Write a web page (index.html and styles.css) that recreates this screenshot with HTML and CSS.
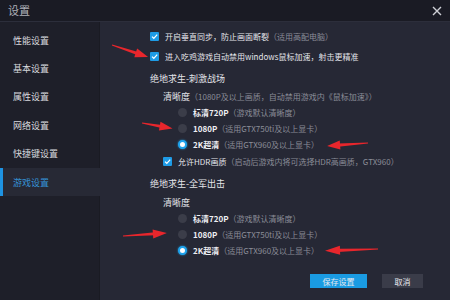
FILE: index.html
```html
<!DOCTYPE html>
<html lang="zh">
<head>
<meta charset="utf-8">
<link rel="stylesheet" href="styles.css">
</head>
<body>
<div class="window">
  <div class="titlebar">
    <span class="title">设置</span>
    <svg class="close" width="10" height="10" viewBox="0 0 10 10"><path d="M1 1L9 9M9 1L1 9" stroke="#cfd0d6" stroke-width="1.4"/></svg>
  </div>
  <div class="main">
    <nav class="sidebar">
      <div class="nav-item">性能设置</div>
      <div class="nav-item">基本设置</div>
      <div class="nav-item">属性设置</div>
      <div class="nav-item">网络设置</div>
      <div class="nav-item">快捷键设置</div>
      <div class="nav-item active">游戏设置</div>
    </nav>
    <section class="content">
      <div class="row r1"><span class="cb"><svg width="9" height="9" viewBox="0 0 9 9"><path d="M2 4.6L3.8 6.3L7.2 2.6" fill="none" stroke="#fff" stroke-width="1.2"/></svg></span><span class="txt">开启垂直同步，防止画面断裂</span><span class="note">（适用高配电脑）</span></div>
      <div class="row r2"><span class="cb"><svg width="9" height="9" viewBox="0 0 9 9"><path d="M2 4.6L3.8 6.3L7.2 2.6" fill="none" stroke="#fff" stroke-width="1.2"/></svg></span><span class="txt">进入吃鸡游戏自动禁用windows鼠标加速，射击更精准</span></div>
      <div class="row heading h1">绝地求生-刺激战场</div>
      <div class="row sub s1"><span class="label">清晰度</span><span class="note">（1080P及以上画质，自动禁用游戏内《鼠标加速》）</span></div>
      <div class="row opt"><span class="radio"></span><span class="olabel">标清720P</span><span class="note">（游戏默认清晰度）</span></div>
      <div class="row opt"><span class="radio"></span><span class="olabel">1080P</span><span class="note">（适用GTX750ti及以上显卡）</span></div>
      <div class="row opt"><span class="radio on"></span><span class="olabel">2K超清</span><span class="note">（适用GTX960及以上显卡）</span></div>
      <div class="row sub c3"><span class="cb"><svg width="9" height="9" viewBox="0 0 9 9"><path d="M2 4.6L3.8 6.3L7.2 2.6" fill="none" stroke="#fff" stroke-width="1.2"/></svg></span><span class="txt">允许HDR画质</span><span class="note">（启动后游戏内将可选择HDR高画质，GTX960）</span></div>
      <div class="row heading h2">绝地求生-全军出击</div>
      <div class="row sub s2"><span class="label">清晰度</span></div>
      <div class="row opt"><span class="radio"></span><span class="olabel">标清720P</span><span class="note">（游戏默认清晰度）</span></div>
      <div class="row opt"><span class="radio"></span><span class="olabel">1080P</span><span class="note">（适用GTX750ti及以上显卡）</span></div>
      <div class="row opt"><span class="radio on"></span><span class="olabel">2K超清</span><span class="note">（适用GTX960及以上显卡）</span></div>
      <div class="buttons">
        <button class="btn save">保存设置</button>
        <button class="btn cancel">取消</button>
      </div>
    </section>
  </div>
  <svg class="arrows" width="450" height="300" viewBox="0 0 450 300">
    <g fill="#e8262c">
      <g transform="translate(112 45) rotate(18.4)">
        <polygon points="0,-0.4 27,-1.6 27,1.6 0,0.4"/>
        <polygon points="25,-4.5 38,0 25,4.5"/>
      </g>
      <g transform="translate(142 123) rotate(10)">
        <polygon points="0,-0.4 20,-1.6 20,1.6 0,0.4"/>
        <polygon points="18,-4.5 31,0 18,4.5"/>
      </g>
      <g transform="translate(368 143) rotate(175.8)">
        <polygon points="0,-0.4 30,-1.6 30,1.6 0,0.4"/>
        <polygon points="28,-4.5 41,0 28,4.5"/>
      </g>
      <g transform="translate(123 236) rotate(-4)">
        <polygon points="0,-0.4 32,-1.6 32,1.6 0,0.4"/>
        <polygon points="30,-4.5 44,0 30,4.5"/>
      </g>
      <g transform="translate(378 249) rotate(178)">
        <polygon points="0,-0.4 40,-1.6 40,1.6 0,0.4"/>
        <polygon points="38,-4.5 53,0 38,4.5"/>
      </g>
    </g>
  </svg>
</div>
</body>
</html>
```

FILE: styles.css
```css
* { box-sizing: border-box; }
html, body { margin: 0; padding: 0; }
body {
  width: 450px;
  height: 300px;
  overflow: hidden;
  background: #262835;
  font-family: "Noto Sans CJK SC", "Noto Sans", sans-serif;
}
.window {
  position: relative;
  width: 450px;
  height: 300px;
  display: flex;
  flex-direction: column;
}
.titlebar {
  height: 22px;
  flex: none;
  background: #1a1b24;
  display: flex;
  align-items: center;
  justify-content: space-between;
  padding: 0 8px 0 8px;
  border-bottom: 1px solid #2c2e3b;
}
.title {
  color: #aeb0b8;
  font-size: 11px;
  line-height: 1;
}
.close { margin-right: 0; }
.main {
  flex: 1;
  display: flex;
}
.sidebar {
  width: 100px;
  flex: none;
  background: #1e1f29;
  padding-top: 4px;
  border-right: 1px solid #1a1b23;
}
.nav-item {
  height: 28.4px;
  display: flex;
  align-items: center;
  padding-left: 13px;
  color: #d8d9de;
  font-size: 9px;
}
.nav-item.active {
  background: #272935;
  color: #3592d6;
  border-left: 3px solid #1e93e2;
  padding-left: 10px;
  margin-right: -1px;
}
.content {
  flex: 1;
  padding: 6px 0 0 50px;
  display: flex;
  flex-direction: column;
}
.row {
  height: 16px;
  display: flex;
  align-items: center;
  font-size: 8px;
  white-space: nowrap;
}
.r2 { margin-top: 4px; }
.h1 { margin-top: 6px; }
.s1 { margin-top: 2px; }
.c3 { margin-top: 1px; }
.h2 { margin-top: 6px; }
.s2 { margin-top: 3px; }
.heading {
  color: #e4e5ea;
  font-size: 9px;
}
.sub { padding-left: 13px; }
.opt { padding-left: 28px; }
.cb {
  width: 9px;
  height: 9px;
  background: #1e9be6;
  border-radius: 1px;
  display: inline-flex;
  margin-right: 6px;
  flex: none;
}
.cb svg { display: block; }
.txt { color: #e4e5ea; }
.label { color: #e4e5ea; font-size: 9px; }
.note { color: #8b8d98; }
.radio {
  width: 9px;
  height: 9px;
  border-radius: 50%;
  background: #3b3d49;
  margin-right: 6px;
  flex: none;
}
.radio.on {
  background: #fff;
  border: 2.5px solid #1fa3ec;
  box-shadow: 0 0 2px #1fa3ec;
}
.olabel {
  color: #eeeff3;
  font-weight: 700;
}
.buttons {
  display: flex;
  justify-content: flex-end;
  gap: 15px;
  margin-top: 16px;
  padding-right: 27px;
}
.btn {
  height: 14px;
  border: none;
  padding: 0;
  font-family: inherit;
  font-size: 8px;
  color: #e8e9ee;
  display: flex;
  align-items: center;
  justify-content: center;
}
.save { width: 57px; background: #1a9be2; }
.cancel { width: 41px; background: #3a3c49; }
.arrows {
  position: absolute;
  left: 0;
  top: 0;
  pointer-events: none;
}
```
